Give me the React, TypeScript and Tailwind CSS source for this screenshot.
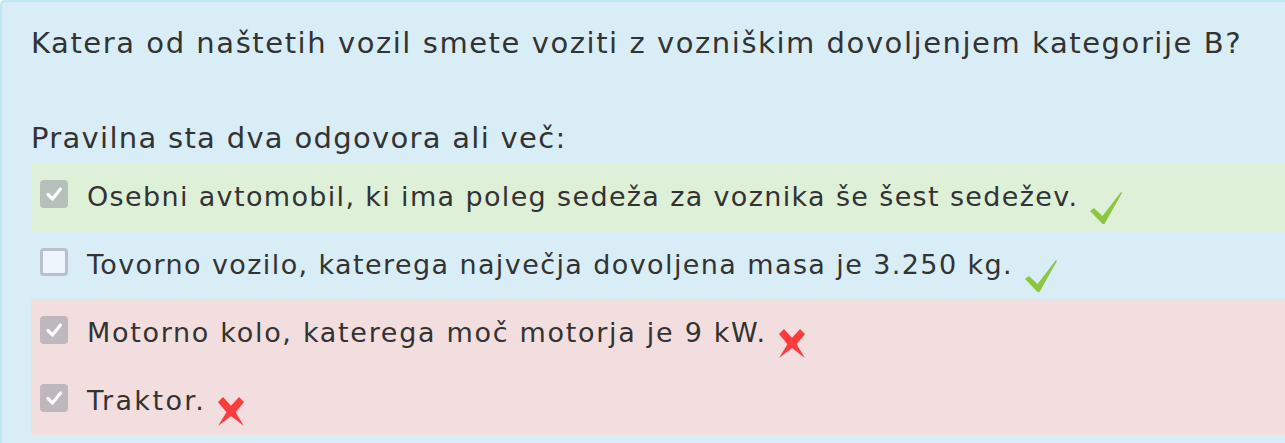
const answers = [
  { text: 'Osebni avtomobil, ki ima poleg sedeža za voznika še šest sedežev.', checked: true, correct: true, tone: 'bg-[#dff0d8]', track: 'tracking-[1.35px]' },
  { text: 'Tovorno vozilo, katerega največja dovoljena masa je 3.250 kg.', checked: false, correct: true, tone: '', track: 'tracking-[1.4px]' },
  { text: 'Motorno kolo, katerega moč motorja je 9 kW.', checked: true, correct: false, tone: 'bg-[#f2dede]', track: 'tracking-[1.7px]' },
  { text: 'Traktor.', checked: true, correct: false, tone: 'bg-[#f2dede]', track: 'tracking-[2.4px]' },
];

function Box({ checked }: { checked: boolean }) {
  if (!checked) {
    return <div className="mt-[3px] h-[28px] w-[28px] shrink-0 rounded-[4px] border-[3px] border-[#b9c0cc] bg-[#edf5fc]" />;
  }
  return (
    <div className="mt-[3px] flex h-[28px] w-[28px] shrink-0 items-center justify-center rounded-[4px] bg-[#8a8f99]/50">
      <svg width="18" height="18" viewBox="0 0 18 18" fill="none">
        <path d="M3 9.5 L7.5 14 L15.5 4" stroke="white" strokeWidth="3.2" strokeLinecap="round" strokeLinejoin="round" />
      </svg>
    </div>
  );
}

function Tick() {
  return (
    <svg className="mt-[15px] shrink-0" width="32" height="32" viewBox="0 0 32 32">
      <path d="M0 19 L4 16 L12.5 24 L31 0 L32 1 L14.5 32 L12.5 32 Z" fill="#8dc63f" />
    </svg>
  );
}

function Cross() {
  return (
    <svg className="mt-[16px] shrink-0" width="26" height="29" viewBox="0 0 26 29">
      <path d="M0 5 L5 0 L15 11 L26 29 L9 16 Z" fill="#ff3b3b" />
      <path d="M26 5 L21 0 L11 11 L0 29 L17 16 Z" fill="#ff3b3b" />
    </svg>
  );
}

export default function App() {
  return (
    <div className="min-h-[443px] bg-white font-['DejaVu_Sans',sans-serif] text-[#333]">
      <div className="min-h-[443px] rounded-tl-[5px] border-l-2 border-t-2 border-[#bce8f1] bg-[#d9edf7] pl-[29px] pt-[21px] leading-[40px]">
        <h1 className="whitespace-nowrap text-[29px] tracking-[1.56px]">Katera od naštetih vozil smete voziti z vozniškim dovoljenjem kategorije B?</h1>
        <p className="mt-[55px] whitespace-nowrap text-[29px] tracking-[1.3px]">Pravilna sta dva odgovora ali več:</p>
        <div className="mt-[5px] text-[27px]">
          {answers.map((a) => (
            <div key={a.text} className={`flex h-[68px] items-start py-[14px] pl-[9px] ${a.tone}`}>
              <Box checked={a.checked} />
              <span className={`ml-[19px] whitespace-nowrap ${a.track}`}>{a.text}</span>
              <span className="ml-[12px] flex">{a.correct ? <Tick /> : <Cross />}</span>
            </div>
          ))}
        </div>
      </div>
    </div>
  );
}
